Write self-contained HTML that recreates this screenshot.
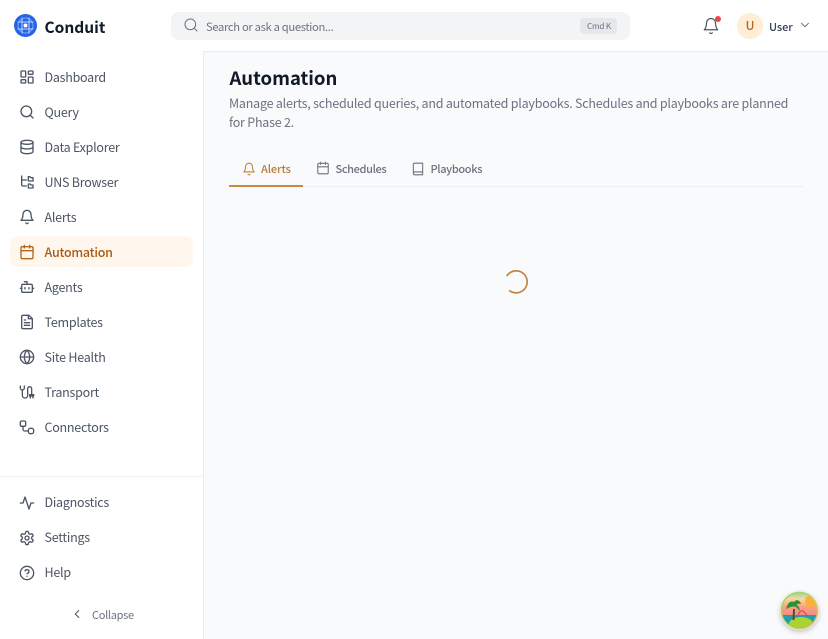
<!DOCTYPE html>
<html><head><meta charset="utf-8"><style>
*{box-sizing:border-box;margin:0;padding:0}
html,body{width:828px;height:639px;overflow:hidden;background:#fff}
body{position:relative;font-family:"Liberation Sans","Noto Sans CJK SC",sans-serif;-webkit-font-smoothing:antialiased}
.t{position:absolute;white-space:nowrap;font-family:"Noto Sans CJK SC","Liberation Sans",sans-serif}
.nav{font-size:12.5px;letter-spacing:-.25px;color:#4b5563;line-height:20px;left:44.5px}
svg.i{position:absolute;width:18px;height:18px;fill:none;stroke:#4b5563;stroke-width:1.8;stroke-linecap:round;stroke-linejoin:round}
svg.n{width:16px;height:16px;margin:1px 0 0 1px;stroke-width:2}
</style></head><body>
<div style="position:absolute;left:204px;top:52px;width:624px;height:587px;background:#f9fafb"></div>
<div style="position:absolute;left:203px;top:51px;width:1px;height:588px;background:#e9ebef"></div>
<div style="position:absolute;left:203px;top:51px;width:625px;height:1px;background:#e9ebef"></div>
<div style="position:absolute;left:0;top:476px;width:203px;height:1px;background:#eef0f3"></div>

<svg style="position:absolute;left:14px;top:14px" width="23" height="23" viewBox="0 0 23 23"><circle cx="11.5" cy="11.5" r="11.5" fill="#2563eb"/><g fill="none" stroke="#bcd3ff" stroke-width="1"><path d="M8 3.500v16M15 3.500v16M3.500 8h16M3.500 15h16"/><circle cx="11.500" cy="11.500" r="7.500" stroke-opacity=".6"/></g><circle cx="11.5" cy="11.5" r="2" fill="#fff"/></svg>
<div class="t" style="left:44.5px;top:15px;font-size:15.500px;font-weight:700;color:#111827;line-height:24px">Conduit</div>

<div style="position:absolute;left:171px;top:12px;width:459px;height:28px;background:#f3f4f6;border-radius:8px"></div>
<svg class="i" style="left:183px;top:17px;width:16px;height:16px;stroke:#6b7280;stroke-width:1.5" viewBox="0 0 24 24"><circle cx="11" cy="11" r="8"/><path d="m21 21-4.3-4.3"/></svg>
<div class="t" style="left:206px;top:17px;font-size:11.200px;letter-spacing:-.32px;color:#6b7280;line-height:20px">Search or ask a question...</div>
<div style="position:absolute;left:580px;top:18px;width:37px;height:16px;background:#e5e7eb;border-radius:4px"></div>
<div class="t" style="left:587px;top:18px;font-size:8.200px;letter-spacing:-.2px;color:#6b7280;line-height:16px">Cmd K</div>

<svg class="i" style="left:702px;top:17px" viewBox="0 0 24 24"><path stroke-width="1.6" d="M6 8a6 6 0 0 1 12 0c0 7 3 9 3 9H3s3-2 3-9"/><path stroke-width="1.6" d="M10.3 21a1.9 1.9 0 0 0 3.4 0"/></svg>
<div style="position:absolute;left:715px;top:16px;width:6px;height:6px;border-radius:50%;background:#ef4444"></div>
<div style="position:absolute;left:737px;top:13px;width:26px;height:26px;border-radius:50%;background:#ffedd5"></div>
<div class="t" style="left:737px;top:13px;width:26px;text-align:center;font-size:12px;color:#b4651b;line-height:26px;font-weight:500">U</div>
<div class="t" style="left:769px;top:17px;font-size:11px;letter-spacing:-.1px;color:#374151;line-height:20px;font-weight:500">User</div>
<svg class="i" style="left:798px;top:18px;width:14px;height:14px;stroke:#6b7280;stroke-width:1.6" viewBox="0 0 24 24"><path d="m6 9 6 6 6-6"/></svg>

<div style="position:absolute;left:10px;top:236px;width:183px;height:31px;background:#fff7ed;border-radius:8px"></div>

<svg class="i n" style="left:18px;top:68px" viewBox="0 0 24 24"><rect x="3" y="3" width="7" height="9" rx="1"/><rect x="14" y="3" width="7" height="5" rx="1"/><rect x="14" y="12" width="7" height="9" rx="1"/><rect x="3" y="16" width="7" height="5" rx="1"/></svg>
<div class="t nav" style="top:67px">Dashboard</div>
<svg class="i n" style="left:18px;top:103px" viewBox="0 0 24 24"><circle cx="11" cy="11" r="8"/><path d="m21 21-4.3-4.3"/></svg>
<div class="t nav" style="top:102px">Query</div>
<svg class="i n" style="left:18px;top:138px" viewBox="0 0 24 24"><ellipse cx="12" cy="5" rx="9" ry="3"/><path d="M3 5v14a9 3 0 0 0 18 0V5"/><path d="M3 12a9 3 0 0 0 18 0"/></svg>
<div class="t nav" style="top:137px">Data Explorer</div>
<svg class="i n" style="left:18px;top:173px" viewBox="0 0 24 24"><path d="M4 3v13a2 2 0 0 0 2 2h5"/><path d="M4 9h7"/><path d="M14 4h2.500l1.500 1.500h3v5h-7z"/><path d="M14 15h2.500l1.500 1.500h3v4.500h-7z"/></svg>
<div class="t nav" style="top:172px">UNS Browser</div>
<svg class="i n" style="left:18px;top:208px" viewBox="0 0 24 24"><path d="M6 8a6 6 0 0 1 12 0c0 7 3 9 3 9H3s3-2 3-9"/><path d="M10.300 21a1.900 1.900 0 0 0 3.400 0"/></svg>
<div class="t nav" style="top:207px">Alerts</div>
<svg class="i n" style="left:18px;top:243px;stroke:#b4651b" viewBox="0 0 24 24"><rect x="3" y="4" width="18" height="18" rx="2"/><path d="M16 2v4M8 2v4M3 10h18"/></svg>
<div class="t nav" style="top:242px;color:#a85a14;font-weight:500">Automation</div>
<svg class="i n" style="left:18px;top:278px" viewBox="0 0 24 24"><path d="M12 8V4H8"/><rect x="4" y="8" width="16" height="12" rx="2"/><path d="M2 14h2M20 14h2M15 13v2M9 13v2"/></svg>
<div class="t nav" style="top:277px">Agents</div>
<svg class="i n" style="left:18px;top:313px" viewBox="0 0 24 24"><path d="M15 2H6a2 2 0 0 0-2 2v16a2 2 0 0 0 2 2h12a2 2 0 0 0 2-2V7z"/><path d="M14 2v5h6M16 13H8M16 17H8M10 9H8"/></svg>
<div class="t nav" style="top:312px">Templates</div>
<svg class="i n" style="left:18px;top:348px" viewBox="0 0 24 24"><circle cx="12" cy="12" r="10"/><path d="M12 2a14.500 14.500 0 0 0 0 20 14.500 14.500 0 0 0 0-20M2 12h20"/></svg>
<div class="t nav" style="top:347px">Site Health</div>
<svg class="i n" style="left:18px;top:383px" viewBox="0 0 24 24"><path d="M2 3v3a3 3 0 0 0 6 0V3"/><path d="M5 9v8a4 4 0 0 0 8 0V7a3 3 0 0 1 6 0v9"/><path d="M16 16h6v2h-6zM17 18v3M21 18v3"/></svg>
<div class="t nav" style="top:382px">Transport</div>
<svg class="i n" style="left:18px;top:418px" viewBox="0 0 24 24"><rect x="2" y="3" width="8" height="8" rx="2"/><rect x="14" y="14" width="8" height="8" rx="3"/><path d="M6 11v4a3 3 0 0 0 3 3h5"/></svg>
<div class="t nav" style="top:417px">Connectors</div>

<svg class="i n" style="left:18px;top:494px" viewBox="0 0 24 24"><path d="M22 12h-4l-3 9L9 3l-3 9H2"/></svg>
<div class="t nav" style="top:492px">Diagnostics</div>
<svg class="i n" style="left:18px;top:529px" viewBox="0 0 24 24"><path d="M12.220 2h-.44a2 2 0 0 0-2 2v.18a2 2 0 0 1-1 1.730l-.43.25a2 2 0 0 1-2 0l-.15-.08a2 2 0 0 0-2.730.73l-.22.380a2 2 0 0 0 .73 2.730l.15.1a2 2 0 0 1 1 1.720v.51a2 2 0 0 1-1 1.740l-.15.09a2 2 0 0 0-.73 2.730l.22.380a2 2 0 0 0 2.730.73l.15-.08a2 2 0 0 1 2 0l.43.25a2 2 0 0 1 1 1.730V20a2 2 0 0 0 2 2h.44a2 2 0 0 0 2-2v-.18a2 2 0 0 1 1-1.730l.43-.25a2 2 0 0 1 2 0l.15.08a2 2 0 0 0 2.730-.73l.22-.390a2 2 0 0 0-.73-2.730l-.15-.08a2 2 0 0 1-1-1.740v-.5a2 2 0 0 1 1-1.740l.15-.09a2 2 0 0 0 .73-2.730l-.22-.380a2 2 0 0 0-2.730-.73l-.15.08a2 2 0 0 1-2 0l-.43-.25a2 2 0 0 1-1-1.730V4a2 2 0 0 0-2-2z"/><circle cx="12" cy="12" r="3"/></svg>
<div class="t nav" style="top:527px">Settings</div>
<svg class="i n" style="left:18px;top:564px" viewBox="0 0 24 24"><circle cx="12" cy="12" r="10"/><path d="M9.090 9a3 3 0 0 1 5.830 1c0 2-3 3-3 3M12 17h.01"/></svg>
<div class="t nav" style="top:562px">Help</div>
<svg class="i" style="left:70px;top:607px;width:14px;height:14px;stroke:#4b5563" viewBox="0 0 24 24"><path d="m15 18-6-6 6-6"/></svg>
<div class="t" style="left:92px;top:604.500px;font-size:11px;letter-spacing:-.3px;color:#6b7280;line-height:20px">Collapse</div>

<div class="t" style="left:229.500px;top:63.500px;font-size:18.500px;font-weight:700;color:#111827;line-height:28px">Automation</div>
<div class="t" style="left:229px;top:93px;font-size:12.500px;letter-spacing:-.225px;color:#6b7280;line-height:20px">Manage alerts, scheduled queries, and automated playbooks. Schedules and playbooks are planned</div>
<div class="t" style="left:229px;top:112px;font-size:12.500px;letter-spacing:-.225px;color:#6b7280;line-height:20px">for Phase 2.</div>

<div style="position:absolute;left:229px;top:186px;width:574px;height:1px;background:#eceef1"></div>
<div style="position:absolute;left:229px;top:185px;width:74px;height:2px;background:#c98a45"></div>
<svg class="i" style="left:242px;top:162px;width:14px;height:14px;stroke:#c0843f" viewBox="0 0 24 24"><path d="M6 8a6 6 0 0 1 12 0c0 7 3 9 3 9H3s3-2 3-9"/><path d="M10.300 21a1.900 1.900 0 0 0 3.400 0"/></svg>
<div class="t" style="left:261px;top:158.500px;font-size:11px;letter-spacing:-.1px;font-weight:500;color:#b97a32;line-height:20px">Alerts</div>
<svg class="i" style="left:316px;top:161px;width:14px;height:14px;stroke:#6b7280" viewBox="0 0 24 24"><rect x="3" y="4" width="18" height="18" rx="2"/><path d="M16 2v4M8 2v4M3 10h18"/></svg>
<div class="t" style="left:335.500px;top:158.500px;font-size:11px;letter-spacing:-.35px;font-weight:500;color:#6b7280;line-height:20px">Schedules</div>
<svg class="i" style="left:411px;top:162px;width:14px;height:14px;stroke:#6b7280" viewBox="0 0 24 24"><path d="M4 19.500v-15A2.500 2.500 0 0 1 6.500 2H20v20H6.500a2.500 2.500 0 0 1 0-5H20"/></svg>
<div class="t" style="left:430.500px;top:158.500px;font-size:11px;letter-spacing:-.35px;font-weight:500;color:#6b7280;line-height:20px">Playbooks</div>

<svg style="position:absolute;left:502px;top:268px" width="26" height="26" viewBox="0 0 26 26"><path d="M6 6.500A11 11 0 1 1 6.500 22" transform="rotate(-8 13 13)" fill="none" stroke="#c0843f" stroke-width="1.700" stroke-linecap="round"/></svg>

<div style="position:absolute;left:780px;top:591px;width:39px;height:39px;border-radius:50%;box-shadow:0 2px 5px rgba(0,0,0,.22)"></div>
<svg style="position:absolute;left:780px;top:591px" width="39" height="39" viewBox="0 0 39 39"><defs><clipPath id="c"><circle cx="19.500" cy="19.500" r="17.500"/></clipPath><linearGradient id="r" x1="0" y1="0" x2="1" y2="1"><stop offset="0" stop-color="#8fd36a"/><stop offset=".6" stop-color="#c8d860"/><stop offset="1" stop-color="#f0a860"/></linearGradient><linearGradient id="s" x1="0" y1="0" x2="0" y2="1"><stop offset="0" stop-color="#7fcdb0"/><stop offset=".3" stop-color="#f5dc9a"/><stop offset=".62" stop-color="#f7a27e"/><stop offset="1" stop-color="#f08a80"/></linearGradient></defs><circle cx="19.500" cy="19.500" r="19" fill="url(#r)"/><g clip-path="url(#c)"><rect width="39" height="26" fill="url(#s)"/><rect y="24" width="39" height="15" fill="#1f9fae"/><circle cx="31" cy="10" r="6" fill="#fbb03b"/><ellipse cx="21" cy="33" rx="12" ry="7" fill="#a8d435"/><path d="M12.500 29l.6-11h1.800l-.4 11z" fill="#5f4326"/><path d="M6.500 18c0-5 4-9 7.500-7 2-3 6-2 7 2-2-.5-3.500 0-4.500 1 2 1 3.500 3 3 6-2-3-3.500-4.500-5.500-4.500-3 0-5 1-7.500 2.500z" fill="#2f8f3a"/><path d="M18 25c1-4 3-6 5-5l4 4" fill="none" stroke="#e8476a" stroke-width="1.300"/></g></svg>
</body></html>
